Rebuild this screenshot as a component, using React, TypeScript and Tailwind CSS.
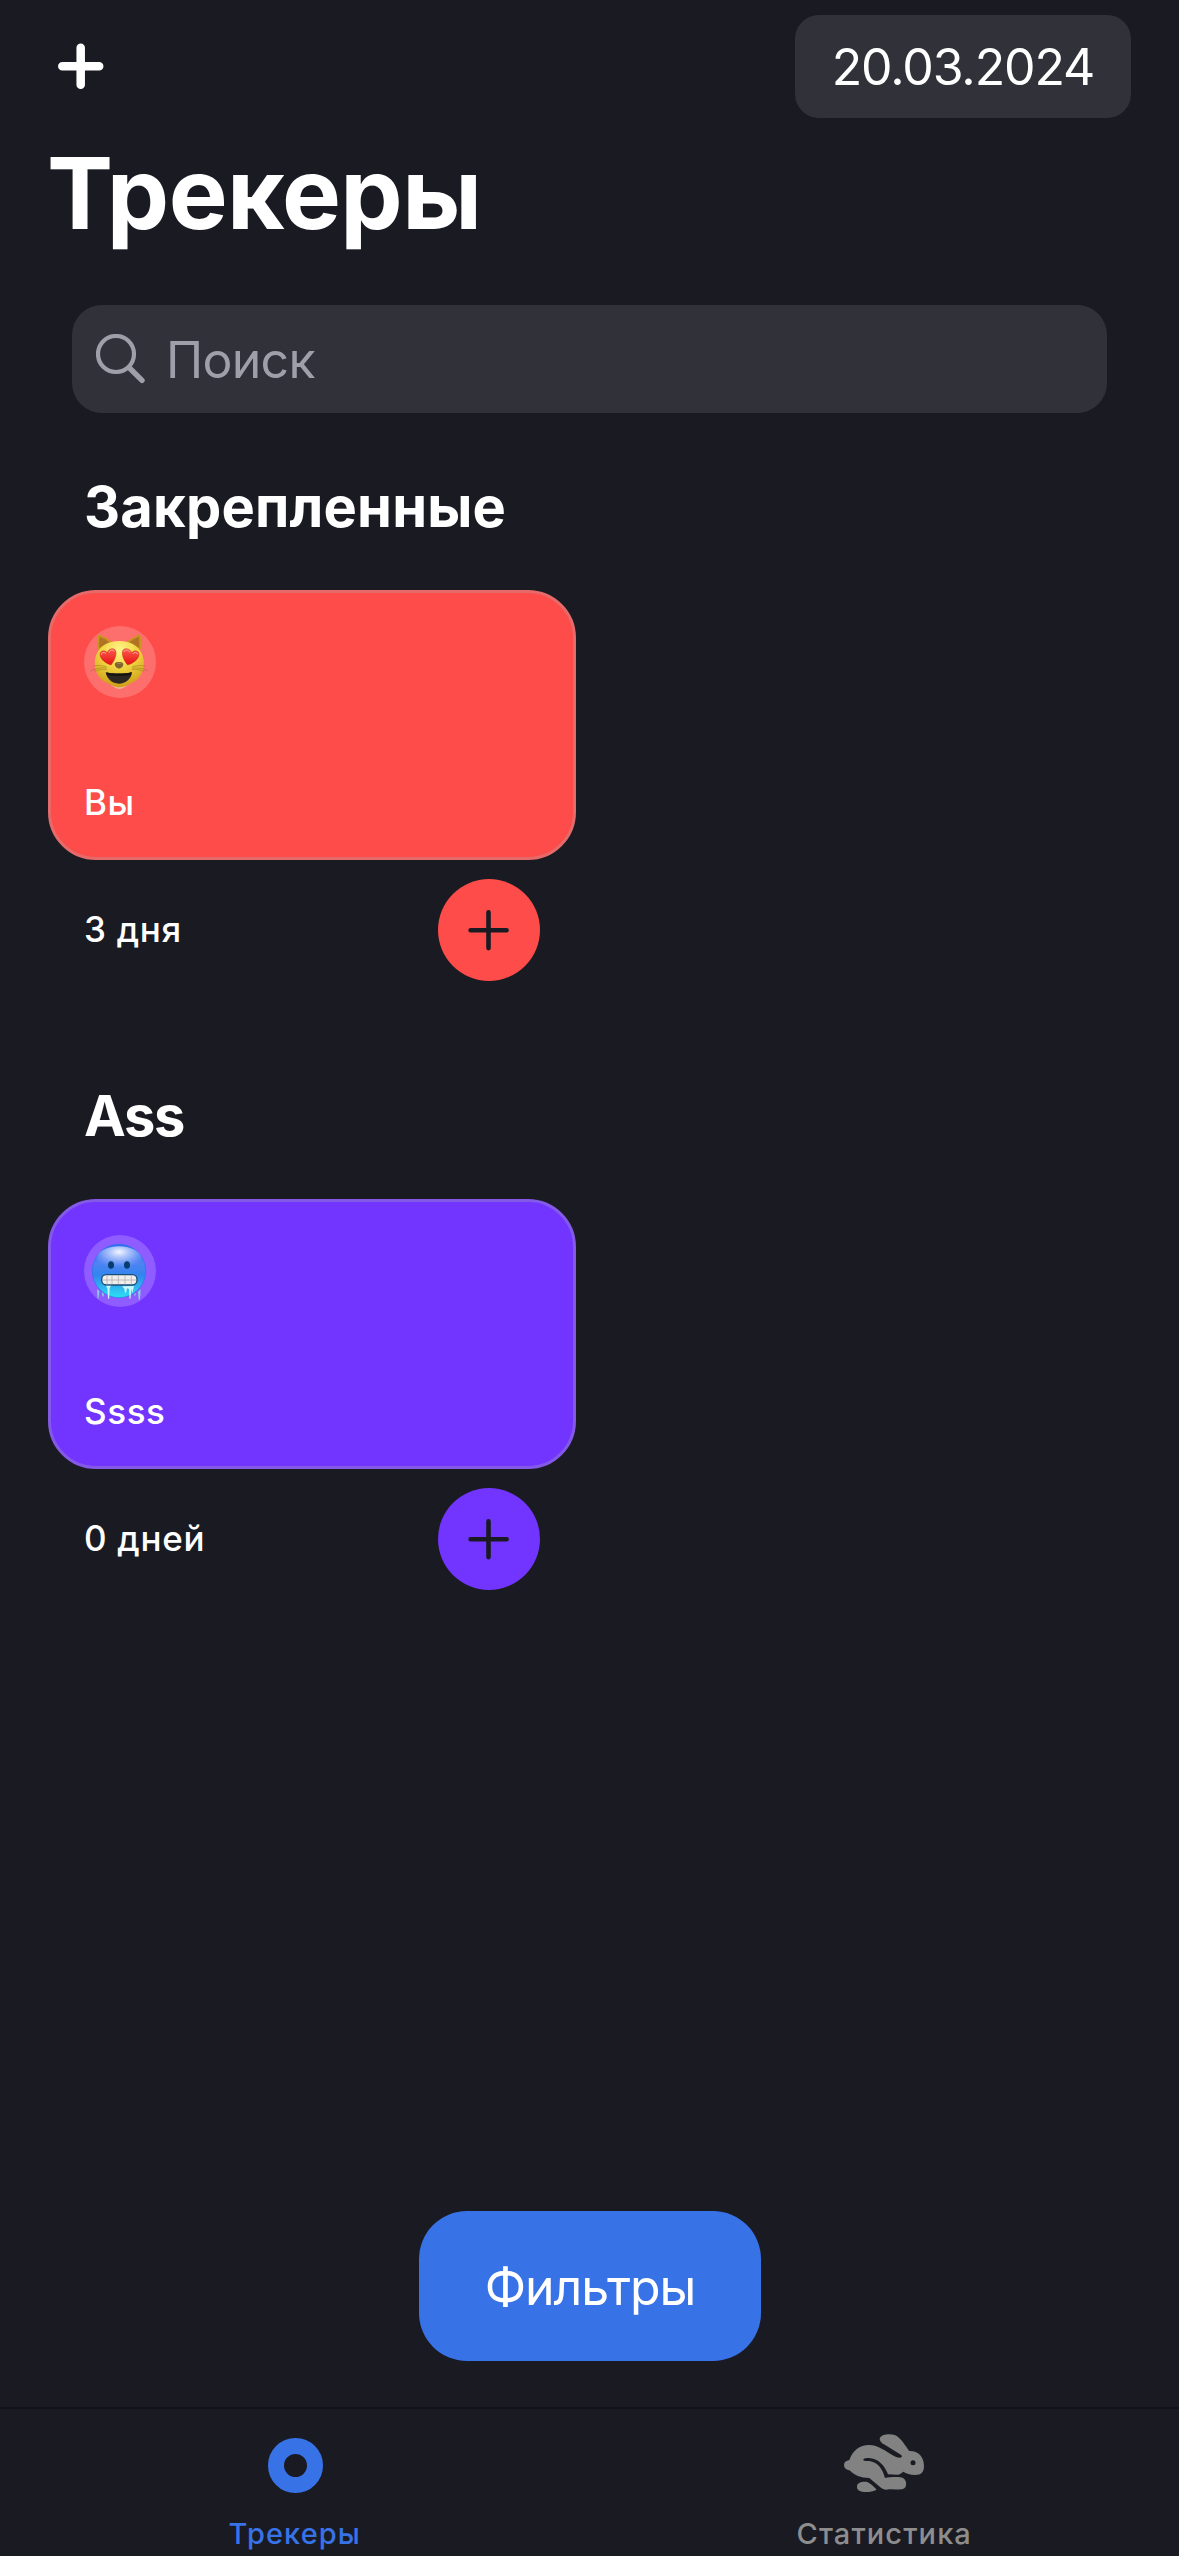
import type { ReactNode } from "react";

function HeartEyesCat() {
  return (
    <svg viewBox="72 78 216 216" className="size-[72px]">
      <defs>
        <radialGradient id="catFace" cx="0.5" cy="0.2" r="0.85">
          <stop offset="0" stopColor="#fff68a" />
          <stop offset="0.45" stopColor="#f1d341" />
          <stop offset="0.85" stopColor="#d3a51c" />
          <stop offset="1" stopColor="#c08a12" />
        </radialGradient>
        <linearGradient id="catHeart" x1="0" y1="0" x2="0" y2="1">
          <stop offset="0" stopColor="#ff5a4e" />
          <stop offset="1" stopColor="#e3120f" />
        </linearGradient>
      </defs>
      <path d="M112 148 C110 128 112 110 117 103 C130 108 146 118 155 126 L128 150Z" fill="#c9961c" />
      <path d="M243 148 C245 128 243 110 239 103 C226 108 210 118 200 126 L228 150Z" fill="#c9961c" />
      <path d="M117 143 L119 110 C130 114 141 121 148 127Z" fill="#b07224" />
      <path d="M238 143 L237 110 C226 114 215 121 208 127Z" fill="#b07224" />
      <path d="M178 123 C216 123 247 144 251 180 C255 214 240 238 214 249 C200 255 190 265 178 265 C166 265 156 255 142 249 C116 238 101 214 105 180 C109 144 140 123 178 123Z" fill="url(#catFace)" />
      <path d="M150 253 C160 260 168 267 178 267 C188 267 197 260 207 253 C196 260 188 262 178 262 C168 262 160 259 150 253Z" fill="#f6b38d" />
      <g stroke="#8d741f" strokeWidth="1.8" fill="none" opacity="0.8">
        <path d="M139 200 C122 196 111 196 101 198M140 204 C120 202 105 206 92 213M141 208 C126 207 114 210 106 214" />
        <path d="M217 200 C234 196 245 196 256 198M216 204 C236 202 251 206 265 213M215 208 C230 207 242 210 250 214" />
      </g>
      <g fill="url(#catHeart)" stroke="#c9251c" strokeWidth="1.5">
        <path d="M153 195 C137 190 121 178 120 164 C119 152 136 148 142 159 C144 146 163 141 167 153 C171 165 162 184 153 195Z" />
        <path d="M203 195 C219 190 236 178 237 164 C238 152 221 148 215 159 C212 146 193 141 188 153 C184 165 193 184 203 195Z" />
      </g>
      <path d="M124 164 C124 157 132 155 137 160M147 157 C149 150 158 147 163 153M192 155 C195 147 206 149 209 156M219 161 C223 155 231 157 233 162" stroke="#ffb0a1" strokeWidth="3" strokeLinecap="round" fill="none" />
      <path d="M165 190 C169 185 185 185 189 190 C192 198 185 205 177 206 C169 205 163 198 165 190Z" fill="#806432" />
      <path d="M169 190 Q177 186 185 190 Q177 194 169 190Z" fill="#a58a58" />
      <path d="M137 217 C150 222 204 222 216 216 C215 236 197 251 177 251 C156 251 140 236 137 217Z" fill="#2e2620" />
      <path d="M139 217 C151 222 203 222 214 217 L213 224 C200 229 154 229 141 224Z" fill="#171513" />
    </svg>
  );
}

function ColdFace() {
  return (
    <svg viewBox="72 75 216 216" className="size-[72px]">
      <defs>
        <linearGradient id="coldFace" x1="0" y1="0" x2="0" y2="1">
          <stop offset="0" stopColor="#2f6cf0" />
          <stop offset="0.35" stopColor="#4f83f3" />
          <stop offset="0.58" stopColor="#3285ee" />
          <stop offset="0.8" stopColor="#2fb6ef" />
          <stop offset="1" stopColor="#2be0f3" />
        </linearGradient>
        <radialGradient id="coldShine" cx="0.5" cy="0.22" r="0.62">
          <stop offset="0" stopColor="#ffffff" stopOpacity="0.95" />
          <stop offset="0.5" stopColor="#c9d6fd" stopOpacity="0.6" />
          <stop offset="1" stopColor="#9db5fa" stopOpacity="0" />
        </radialGradient>
      </defs>
      <circle cx="177" cy="183" r="80" fill="url(#coldFace)" stroke="#2476e4" strokeWidth="2" />
      <ellipse cx="177" cy="147" rx="68" ry="38" fill="url(#coldShine)" />
      <ellipse cx="153" cy="165" rx="9" ry="11.500" fill="#073d6d" />
      <ellipse cx="201" cy="165" rx="9" ry="11.500" fill="#073d6d" />
      <rect x="125" y="194" width="106" height="31" rx="14" fill="#f0eeec" stroke="#174c76" strokeWidth="4" />
      <path d="M128 210H228M141 196V223M156 196V224M175 196V224M195 196V224M214 196V223" stroke="#a9a5a5" strokeWidth="2" />
      <g fill="#c9f5fc">
        <path d="M138 227 L153 227 L149 234 L147.500 266 L144 266 L142.500 236Z" />
        <path d="M186 229 L222 228 L220 237 L217 249 L214 236 L211.500 266 L208.500 266 L207 237 L201 235 L198 248 L195 248 L193 236Z" />
      </g>
      <g fill="#86cfe8">
        <path d="M111 238 L118 243 L117 254 L115 268 L113 266Z" />
        <path d="M126 247 L132 252 L130 261 L127 258Z" />
        <path d="M242 238 L234 245 L235 256 L236 269 L239 269 L241 256Z" />
        <path d="M222 253 L228 249 L225 259Z" />
      </g>
    </svg>
  );
}

function Rabbit() {
  return (
    <svg viewBox="246 126 252 186" className="h-[62px] w-[84px]" fill="#828282">
      <path d="M252 224 C252 216 259 212 268 210 C278 182 298 165 328 165 C354 165 378 184 398 196 C408 202 418 205 424 202 C428 199 425 196 420 193 L372 163 C362 157 357 149 360 143 C366 132 390 130 404 135 C422 142 434 165 448 183 C474 182 492 200 492 228 C492 246 484 255 466 255 C450 255 438 250 430 245 C424 249 420 254 412 254 L384 253 C374 228 356 205 326 204 C314 203 308 207 310 211 C312 214 322 213 328 213 C352 216 368 236 375 264 C392 261 422 259 432 266 C440 273 441 288 433 295 C425 302 402 296 388 298 C376 300 369 299 361 292 L328 264 C302 264 282 256 269 241 C260 240 252 234 252 224Z" />
      <path d="M322 276 C303 274 291 279 291 290 C291 301 300 306 318 306 C330 306 341 303 350 299 C342 291 332 280 322 276Z" />
      <circle cx="459" cy="218" r="7.500" fill="#1a1b22" />
    </svg>
  );
}

type TrackerProps = {
  title: string;
  titleTracking: string;
  name: string;
  days: string;
  fill: string;
  border: string;
  button: string;
  emoji: ReactNode;
};

function TrackerSection({ title, titleTracking, name, days, fill, border, button, emoji }: TrackerProps) {
  return (
    <section className="flex w-[528px] flex-col">
      <h2 className={`pl-9 text-[56px] leading-[68px] font-bold whitespace-nowrap ${titleTracking}`}>{title}</h2>
      <div className={`mt-[49px] flex h-[270px] flex-col justify-between rounded-[48px] border-[3px] px-[33px] pt-[33px] pb-[34px] ${fill} ${border}`}>
        <div className="size-[72px] rounded-full bg-white/20">{emoji}</div>
        <p className="text-[35px] leading-[42px] font-medium tracking-[0.6px]">{name}</p>
      </div>
      <div className="mt-[19px] flex h-[102px] items-center justify-between px-9">
        <span className="pb-[3px] text-[35px] leading-[42px] font-medium tracking-[0.7px]">{days}</span>
        <button aria-label="Отметить" className={`grid size-[102px] place-items-center rounded-full ${button}`}>
          <svg viewBox="0 0 42 42" className="size-[42px]" stroke="#1a1b22" strokeWidth="4.600" strokeLinecap="round">
            <path d="M2.600 21.300H38.600M20.500 3.400V39.100" />
          </svg>
        </button>
      </div>
    </section>
  );
}

export default function App() {
  return (
    <div className="flex h-[2556px] w-[1179px] flex-col bg-[#1a1b22] font-['Inter',sans-serif] text-white">
      <header className="flex items-start justify-between pt-[15px] pr-12 pl-[57px]">
        <button aria-label="Добавить" className="mt-[27px]">
          <svg viewBox="0 0 48 48" className="size-12" stroke="white" strokeWidth="8.500" strokeLinecap="round">
            <path d="M5.300 24.300H42.200M23.700 5.800V42.800" />
          </svg>
        </button>
        <div className="grid h-[103px] w-[336px] place-items-center rounded-[24px] bg-[#313139] text-[50px] leading-[60px]">
          <span className="pt-px tracking-[-1.1px]">20.03.2024</span>
        </div>
      </header>

      <h1 className="mt-[15px] pl-[47px] text-[99px] leading-[120px] font-bold tracking-[-0.6px]">Трекеры</h1>

      <div className="mx-[72px] mt-[52px] flex h-[108px] items-center rounded-[30px] bg-[#313139] pl-6 text-[#9f9faa]">
        <svg viewBox="0 0 50 50" className="size-[50px]" fill="none" stroke="currentColor" strokeLinecap="round">
          <circle cx="20" cy="20" r="18" strokeWidth="4.200" />
          <path d="M33.500 34L46 46.300" strokeWidth="5.400" />
        </svg>
        <span className="pt-0.5 pl-5 text-[50px] leading-[60px] tracking-[-0.7px]">Поиск</span>
      </div>

      <main className="mt-[60px] flex flex-col gap-[101px] pl-12">
        <TrackerSection
          title="Закрепленные"
          titleTracking="tracking-[0.2px]"
          name="Вы"
          days="3 дня"
          fill="bg-[#fd4c49]"
          border="border-[#e56a69]"
          button="bg-[#fd4c49]"
          emoji={<HeartEyesCat />}
        />
        <TrackerSection
          title="Ass"
          titleTracking="tracking-[-1.3px]"
          name="Ssss"
          days="0 дней"
          fill="bg-[#7234ff]"
          border="border-[#8459e8]"
          button="bg-[#7234ff]"
          emoji={<ColdFace />}
        />
      </main>

      <button className="mt-auto mb-[46px] ml-[419px] h-[150px] w-[342px] rounded-[48px] bg-[#3772e7] pt-0.5 text-[50px] leading-[60px] tracking-[-1.1px]">
        Фильтры
      </button>

      <nav className="grid h-[149px] shrink-0 grid-cols-2 border-t-2 border-[#121318] text-[29px] leading-9 font-medium">
        <div className="flex flex-col items-center text-[#3772e7]">
          <div className="mt-[28.500px] ml-px size-[55px] rounded-full border-[16.500px] border-current" />
          <span className="mt-[23px] tracking-[1.1px]">Трекеры</span>
        </div>
        <div className="flex flex-col items-center text-[#8d8d8d]">
          <div className="mt-[23px] h-[62px]">
            <Rabbit />
          </div>
          <span className="mt-[22px] tracking-[1.1px]">Статистика</span>
        </div>
      </nav>
    </div>
  );
}
